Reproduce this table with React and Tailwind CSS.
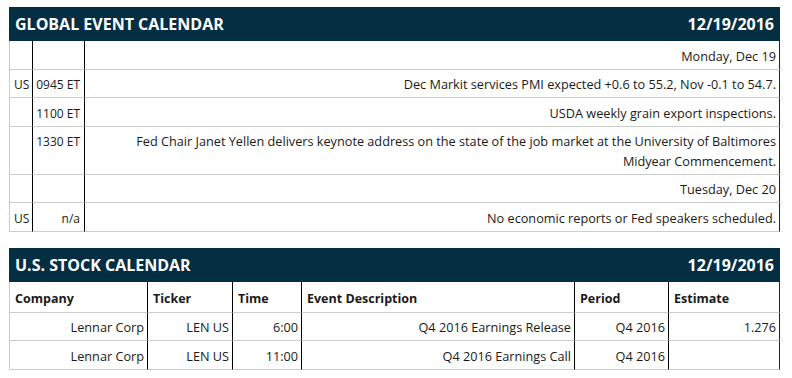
import React from 'react';

const events = [
  { day: 'Monday, Dec 19' },
  { cc: 'US', time: '0945 ET', text: 'Dec Markit services PMI expected +0.6 to 55.2, Nov -0.1 to 54.7.' },
  { cc: '', time: '1100 ET', text: 'USDA weekly grain export inspections.' },
  {
    cc: '',
    time: '1330 ET',
    text: 'Fed Chair Janet Yellen delivers keynote address on the state of the job market at the University of Baltimores Midyear Commencement.',
  },
  { day: 'Tuesday, Dec 20' },
  { cc: 'US', time: 'n/a', text: 'No economic reports or Fed speakers scheduled.' },
];

const stocks = [
  { company: 'Lennar Corp', ticker: 'LEN US', time: '6:00', desc: 'Q4 2016 Earnings Release', period: 'Q4 2016', est: '1.276' },
  { company: 'Lennar Corp', ticker: 'LEN US', time: '11:00', desc: 'Q4 2016 Earnings Call', period: 'Q4 2016', est: '' },
];

const TitleBar = ({ title, date }) => (
  <div className="h-[34px] bg-[#042e42] text-white font-bold text-[16px] flex items-center justify-between px-[6px]">
    <span>{title}</span>
    <span>{date}</span>
  </div>
);

// shared cell styles
const cell = 'border-b border-b-[#cccccc] pt-[5.5px] pb-[2.5px] leading-[19.5px]';
const sep = 'border-r border-r-black';
const edge = 'border-r border-r-[#0e2a38]';

export default function App() {
  return (
    <div
      className="w-[792px] h-[378px] bg-white text-[#1a1a1a] text-[12.7px] pt-[7px] pl-[9px]"
      style={{ fontFamily: '"Open Sans", "Liberation Sans", sans-serif' }}
    >
      <div className="w-[771px]">
        {/* ── Global event calendar ───────────────────── */}
        <TitleBar title="GLOBAL EVENT CALENDAR" date="12/19/2016" />
        <div className="grid grid-cols-[23px_52px_695px] border-l border-l-[#cccccc]">
          {events.map((ev, i) => (
            <React.Fragment key={i}>
              <div className={`${cell} ${sep} text-[12px] pl-[4px]`}>{ev.cc || '\u00a0'}</div>
              <div className={`${cell} ${sep} text-[12px] text-right pr-[4px]`}>{ev.time || '\u00a0'}</div>
              <div className={`${cell} ${edge} text-right pr-[3px] pl-[40px]`}>{ev.day || ev.text}</div>
            </React.Fragment>
          ))}
        </div>

        {/* ── U.S. stock calendar ─────────────────────── */}
        <div className="mt-[16px]">
          <TitleBar title="U.S. STOCK CALENDAR" date="12/19/2016" />
          <div className="grid grid-cols-[138px_85px_69px_273px_94px_111px] border-l border-l-[#cccccc]">
            {['Company', 'Ticker', 'Time', 'Event Description', 'Period', 'Estimate'].map((h, i) => (
              <div
                key={h}
                className={`border-b border-b-[#cccccc] pt-[7px] pb-[3px] leading-[20px] text-[12.5px] font-bold pl-[5px] ${i === 5 ? edge : sep}`}
              >
                {h}
              </div>
            ))}
            {stocks.map((s, i) => (
              <React.Fragment key={i}>
                <div className={`${cell} ${sep} text-right pr-[3px]`}>{s.company}</div>
                <div className={`${cell} ${sep} text-right pr-[3px]`}>{s.ticker}</div>
                <div className={`${cell} ${sep} text-right pr-[3px]`}>{s.time}</div>
                <div className={`${cell} ${sep} text-right pr-[3px]`}>{s.desc}</div>
                <div className={`${cell} ${sep} text-right pr-[3px]`}>{s.period}</div>
                <div className={`${cell} ${edge} text-right pr-[3px]`}>{s.est || '\u00a0'}</div>
              </React.Fragment>
            ))}
          </div>
        </div>
      </div>
    </div>
  );
}
